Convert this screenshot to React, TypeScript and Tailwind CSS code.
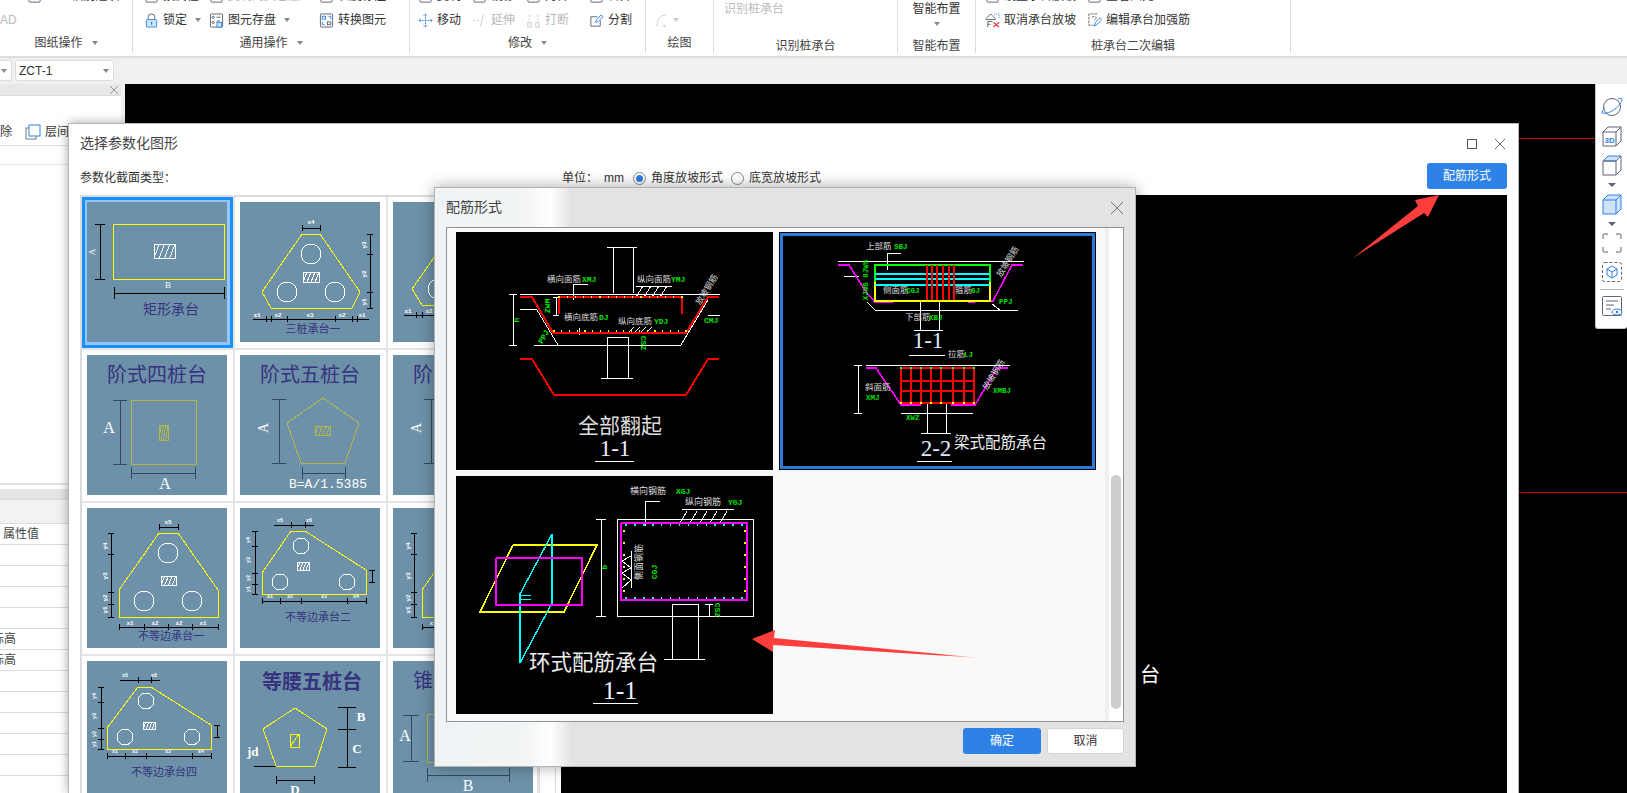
import type { ReactNode } from 'react';

const YEL = '#ffff00';
const OLIVE = '#b4b44c';
const PUR = '#37337f';
const GRN = '#00e000';
const RED = '#ff0000';
const MAG = '#ff00ff';
const CY = '#00ffff';
const MONO = "'Liberation Mono', monospace";
const SERIF = "'Liberation Serif', serif";

function DimV({ x, y1, y2, t = 4, c = '#000' }: { x: number; y1: number; y2: number; t?: number; c?: string }) {
  return (
    <g stroke={c} strokeWidth="1">
      <line x1={x} y1={y1} x2={x} y2={y2} />
      <line x1={x - t} y1={y1} x2={x + t} y2={y1} />
      <line x1={x - t} y1={y2} x2={x + t} y2={y2} />
    </g>
  );
}

function DimH({ y, x1, x2, t = 4, c = '#000' }: { y: number; x1: number; x2: number; t?: number; c?: string }) {
  return (
    <g stroke={c} strokeWidth="1">
      <line x1={x1} y1={y} x2={x2} y2={y} />
      <line x1={x1} y1={y - t} x2={x1} y2={y + t} />
      <line x1={x2} y1={y - t} x2={x2} y2={y + t} />
    </g>
  );
}

function TicksH({ y, xs, t = 3 }: { y: number; xs: number[]; t?: number }) {
  return (
    <g stroke="#000">
      {xs.map((x) => (
        <line key={x} x1={x} y1={y - t} x2={x} y2={y + t} />
      ))}
    </g>
  );
}

function TicksV({ x, ys, t = 3 }: { x: number; ys: number[]; t?: number }) {
  return (
    <g stroke="#000">
      {ys.map((y) => (
        <line key={y} x1={x - t} y1={y} x2={x + t} y2={y} />
      ))}
    </g>
  );
}

function Hatch({ x, y, w, h, c = '#fff' }: { x: number; y: number; w: number; h: number; c?: string }) {
  const step = w / 4;
  return (
    <g stroke={c} fill="none" strokeWidth="1">
      <rect x={x} y={y} width={w} height={h} />
      {[0, 1, 2, 3].map((i) => (
        <line key={i} x1={x + i * step} y1={y + h} x2={x + (i + 1) * step} y2={y} />
      ))}
    </g>
  );
}

function Pile({ cx, cy, r }: { cx: number; cy: number; r: number }) {
  return <circle cx={cx} cy={cy} r={r} fill="none" stroke="#fff" strokeWidth="1" />;
}

function T({ x, y, s = 6, c = '#fff', rot, children, mid, serif }: { x: number; y: number; s?: number; c?: string; rot?: number; children: ReactNode; mid?: boolean; serif?: boolean }) {
  const mono = c === GRN || s <= 6;
  return (
    <text
      x={x}
      y={y}
      fontSize={s}
      fill={c}
      fontFamily={serif ? SERIF : mono ? MONO : undefined}
      fontWeight={mono ? 700 : undefined}
      textAnchor={mid ? 'middle' : 'start'}
      dominantBaseline="middle"
      transform={rot ? `rotate(${rot} ${x} ${y})` : undefined}
    >
      {children}
    </text>
  );
}

function Poly({ p, c = YEL, w = 1 }: { p: string; c?: string; w?: number }) {
  return <polyline points={p} fill="none" stroke={c} strokeWidth={w} />;
}

function Thumb({ children, selected }: { children: ReactNode; selected?: boolean }) {
  return (
    <div className={`h-[151px] w-full pl-[5px] pt-[5px] ${selected ? 'bg-[#95c5f9] shadow-[inset_0_0_0_3px_#1890ff]' : ''}`}>
      <svg viewBox="0 0 140 140" shapeRendering="crispEdges" className="block h-[140px] w-[140px] bg-[#6d91a8]">
        {children}
      </svg>
    </div>
  );
}

function TriPile({ dx = 0 }: { dx?: number }) {
  return (
    <g transform={`translate(${dx} 0)`}>
      <Poly p="72,25 91,25 131,82 131,109 32,109 32,82 72,25" />
      <Pile cx={81} cy={45} r={10} />
      <Pile cx={57} cy={93} r={10} />
      <Pile cx={105} cy={93} r={10} />
      <Hatch x={74} y={68} w={15} h={9} />
      <DimH y={119} x1={32} x2={131} t={3} />
      <TicksH y={119} xs={[57, 81, 105]} />
      <DimV x={24} y1={25} y2={109} t={3} />
      <TicksV x={24} ys={[46, 84, 96]} />
      <T x={18} y={38} rot={-90} mid>y4</T>
      <T x={18} y={68} rot={-90} mid>y3</T>
      <T x={18} y={90} rot={-90} mid>y2</T>
      <T x={18} y={102} rot={-90} mid>y1</T>
      <T x={43} y={115} mid>x1</T>
      <T x={68} y={115} mid>x2</T>
      <T x={92} y={115} mid>x2</T>
      <T x={116} y={115} mid>x1</T>
    </g>
  );
}

function Cells() {
  const cells: ReactNode[] = [
    <Thumb selected key="a">
      <Poly p="26,22 137,22 137,77 26,77 26,22" />
      <Hatch x={67} y={42} w={21} h={14} />
      <DimV x={13} y1={22} y2={77} t={5} />
      <DimH y={91} x1={27} x2={137} t={6} />
      <T x={6} y={50} s={9} rot={-90} mid serif>A</T>
      <T x={81} y={84} s={9} mid serif>B</T>
      <T x={84} y={108} s={14} c={PUR} mid>矩形承台</T>
    </Thumb>,
    <Thumb key="b">
      <Poly p="62,32 80,32 120,90 112,106 31,106 22,90 62,32" />
      <Pile cx={71} cy={52} r={10} />
      <Pile cx={47} cy={90} r={10} />
      <Pile cx={95} cy={90} r={10} />
      <Hatch x={63} y={70} w={16} h={10} />
      <DimH y={26} x1={62} x2={80} t={3} />
      <DimV x={130} y1={32} y2={106} t={3} />
      <TicksV x={130} ys={[52, 90]} />
      <line x1={13} y1={117} x2={129} y2={117} stroke="#000" />
      <TicksH y={117} xs={[26, 31, 47, 95, 112, 117]} />
      <T x={71} y={20} mid>x4</T>
      <T x={124} y={43} rot={-90} mid>y3</T>
      <T x={124} y={72} rot={-90} mid>y2</T>
      <T x={124} y={100} rot={-90} mid>y1</T>
      <T x={17} y={113} mid>x1</T>
      <T x={38} y={113} mid>x2</T>
      <T x={70} y={113} mid>x3</T>
      <T x={102} y={113} mid>x2</T>
      <T x={122} y={113} mid>x1</T>
      <T x={73} y={128} s={11} c={PUR} mid>三桩承台一</T>
    </Thumb>,
    <Thumb key="c">
      <Poly p="59,30 77,30 117,87 109,103 29,103 19,87 59,30" />
      <Pile cx={68} cy={50} r={10} />
      <Pile cx={45} cy={87} r={10} />
      <Pile cx={93} cy={87} r={10} />
      <line x1={11} y1={113} x2={125} y2={113} stroke="#000" />
      <TicksH y={113} xs={[23, 29]} />
      <T x={15} y={109} mid>x1</T>
      <T x={36} y={109} mid>x2</T>
    </Thumb>,
    <Thumb key="d">
      <T x={70} y={22} s={20} c={PUR} mid>阶式四桩台</T>
      <Poly p="44,45 109,45 109,109 44,109 44,45" c={OLIVE} />
      <Hatch x={72} y={70} w={9} h={15} c={OLIVE} />
      <DimV x={33} y1={45} y2={109} t={7} c="#33495a" />
      <DimH y={118} x1={44} x2={108} t={6} c="#33495a" />
      <T x={22} y={74} s={16} mid serif>A</T>
      <T x={78} y={130} s={16} mid serif>A</T>
    </Thumb>,
    <Thumb key="e">
      <T x={70} y={22} s={20} c={PUR} mid>阶式五桩台</T>
      <Poly p="83,43 119,68 105,108 61,108 47,68 83,43" c={OLIVE} />
      <Hatch x={75} y={71} w={15} h={9} c={OLIVE} />
      <DimV x={39} y1={44} y2={108} t={7} c="#33495a" />
      <DimH y={118} x1={62} x2={105} t={6} c="#33495a" />
      <T x={25} y={73} s={14} rot={-90} mid serif>A</T>
      <text x={49} y={133} fontSize={13} fill="#fff" fontFamily={MONO}>B=A/1.5385</text>
    </Thumb>,
    <Thumb key="f">
      <T x={70} y={22} s={20} c={PUR} mid>阶式六桩台</T>
      <DimV x={38} y1={44} y2={108} t={7} c="#33495a" />
      <T x={25} y={73} s={14} rot={-90} mid serif>A</T>
    </Thumb>,
    <Thumb key="g">
      <TriPile />
      <DimH y={19} x1={72} x2={91} t={3} />
      <T x={81} y={14} mid>x5</T>
      <T x={84} y={129} s={11} c={PUR} mid>不等边承台一</T>
    </Thumb>,
    <Thumb key="h">
      <Poly p="51,23 65,23 126,62 126,86 22,86 22,65 51,23" />
      <Pile cx={61} cy={38} r={8} />
      <Pile cx={40} cy={74} r={8} />
      <Pile cx={107} cy={74} r={8} />
      <Hatch x={57} y={54} w={12} h={8} />
      <DimV x={15} y1={23} y2={86} t={3} />
      <TicksV x={15} ys={[38, 65, 76]} />
      <DimH y={93} x1={22} x2={126} t={3} />
      <TicksH y={93} xs={[40, 61, 107]} />
      <DimV x={132} y1={62} y2={74} t={3} />
      <line x1={34} y1={17} x2={74} y2={17} stroke="#000" />
      <TicksH y={17} xs={[51, 65]} />
      <T x={37} y={13} s={5}>x5</T>
      <T x={66} y={13} s={5}>x6</T>
      <T x={9} y={32} rot={-90} s={5} mid>y4</T>
      <T x={9} y={52} rot={-90} s={5} mid>y3</T>
      <T x={9} y={70} rot={-90} s={5} mid>y2</T>
      <T x={9} y={81} rot={-90} s={5} mid>y1</T>
      <T x={30} y={89} s={5} mid>x1</T>
      <T x={50} y={89} s={5} mid>x2</T>
      <T x={84} y={89} s={5} mid>x3</T>
      <T x={116} y={89} s={5} mid>x4</T>
      <T x={78} y={110} s={11} c={PUR} mid>不等边承台二</T>
    </Thumb>,
    <Thumb key="i">
      <TriPile dx={-3} />
    </Thumb>,
    <Thumb key="j">
      <Poly p="51,26 64,26 124,64 124,88 20,88 20,67 51,26" />
      <Pile cx={59} cy={40} r={8} />
      <Pile cx={38} cy={76} r={8} />
      <Pile cx={105} cy={76} r={8} />
      <Hatch x={56} y={61} w={12} h={7} />
      <DimV x={14} y1={26} y2={88} t={3} />
      <TicksV x={14} ys={[41, 67, 78]} />
      <DimH y={95} x1={20} x2={124} t={3} />
      <TicksH y={95} xs={[38, 59, 105]} />
      <DimV x={130} y1={64} y2={76} t={3} />
      <line x1={33} y1={19} x2={73} y2={19} stroke="#000" />
      <TicksH y={19} xs={[51, 64]} />
      <T x={35} y={15} s={5}>x5</T>
      <T x={64} y={15} s={5}>x6</T>
      <T x={8} y={35} rot={-90} s={5} mid>y4</T>
      <T x={8} y={55} rot={-90} s={5} mid>y3</T>
      <T x={8} y={73} rot={-90} s={5} mid>y2</T>
      <T x={8} y={83} rot={-90} s={5} mid>y1</T>
      <T x={28} y={91} s={5} mid>x1</T>
      <T x={48} y={91} s={5} mid>x2</T>
      <T x={81} y={91} s={5} mid>x3</T>
      <T x={114} y={91} s={5} mid>x4</T>
      <T x={77} y={112} s={11} c={PUR} mid>不等边承台四</T>
    </Thumb>,
    <Thumb key="k">
      <text x={72} y={28} fontSize={20} fontWeight="700" fill={PUR} textAnchor="middle">等腰五桩台</text>
      <Poly p="55,47 87,68 75,105 36,105 23,68 55,47" />
      <Poly p="50,73 59,73 59,86 50,86 50,73 59,73" />
      <line x1={50} y1={86} x2={59} y2={73} stroke={YEL} />
      <DimV x={107} y1={46} y2={68} t={9} />
      <DimV x={107} y1={68} y2={106} t={9} />
      <DimH y={119} x1={36} x2={74} t={4} />
      <line x1={14} y1={105} x2={36} y2={105} stroke="#000" />
      <T x={121} y={57} s={13} mid serif><tspan fontWeight="700">B</tspan></T>
      <T x={117} y={89} s={13} mid serif><tspan fontWeight="700">C</tspan></T>
      <T x={7} y={92} s={13} serif><tspan fontWeight="700">jd</tspan></T>
      <T x={55} y={130} s={13} mid serif><tspan fontWeight="700">D</tspan></T>
    </Thumb>,
    <Thumb key="l">
      <T x={70} y={22} s={20} c={PUR} mid>锥形桩承台</T>
      <Poly p="34,53 116,53 116,101 34,101 34,53" c={OLIVE} />
      <DimV x={18} y1={54} y2={100} t={8} c="#33495a" />
      <DimH y={114} x1={34} x2={116} t={7} c="#33495a" />
      <T x={12} y={76} s={16} mid serif>A</T>
      <T x={75} y={126} s={16} mid serif>B</T>
    </Thumb>,
  ];
  return (
    <div className="grid h-[600px] w-[459px] shrink-0 grid-cols-[153px_153px_151px] content-start border-l-2 border-t-2 border-[#dcdcdc]">
      {cells.map((c, i) => (
        <div key={i} className="h-[153px] border-b-2 border-r-2 border-[#e4e4e4]">
          {c}
        </div>
      ))}
    </div>
  );
}

function Dots({ pts, c, r = 0.8 }: { pts: [number, number][]; c: string; r?: number }) {
  return (
    <g fill={c}>
      {pts.map(([x, y], i) => (
        <rect key={i} x={x - r} y={y - r} width={r * 2} height={r * 2} />
      ))}
    </g>
  );
}

const range = (a: number, b: number, n: number) => Array.from({ length: n }, (_, i) => a + ((b - a) * i) / (n - 1));

function PanelA() {
  return (
    <svg viewBox="0 0 317 238" shapeRendering="crispEdges" className="block h-[238px] w-[317px] bg-black">
      <g stroke="#fff" fill="none">
        <line x1={64} y1={62} x2={264} y2={62} />
        <polyline points="157,61 157,15 177,15 177,61" />
        <line x1={151} y1={15} x2={181} y2={15} />
        <polyline points="151,146 151,105 172,105 172,146" />
        <line x1={145} y1={146} x2={177} y2={146} />
        <line x1={78} y1={113} x2={225} y2={113} />
        <line x1={81} y1={78} x2={102} y2={113} />
        <line x1={225} y1={113} x2={252} y2={68} />
        <line x1={64} y1={77} x2={81} y2={77} />
        <line x1={252} y1={83} x2={264} y2={83} />
        <line x1={117} y1={52} x2={132} y2={52} />
        <line x1={117} y1={52} x2={117} y2={68} />
        <line x1={123} y1={96} x2={123} y2={103} />
        <polyline points="180,54 216,54" />
        {range(180, 204, 4).map((x) => (
          <line key={x} x1={x} y1={65} x2={x + 7} y2={54} />
        ))}
        {range(172, 190, 4).map((x) => (
          <line key={x} x1={x} y1={101} x2={x + 6} y2={95} />
        ))}
      </g>
      <DimV x={57} y1={62} y2={113} t={4} c="#fff" />
      <DimV x={100} y1={65} y2={83} t={3} c="#fff" />
      <Poly p="64,65 76,65 97,101 230,101 252,65 263,65" c={RED} w={2} />
      <Poly p="103,82 103,65 226,65 226,82" c={RED} w={2} />
      <Poly p="64,127 76,127 98,163 230,163 252,127 263,127" c={RED} w={2} />
      <Dots pts={range(103, 226, 16).map((x) => [x, 65] as [number, number])} c={YEL} r={0.6} />
      <Dots pts={range(98, 230, 18).map((x) => [x, 99] as [number, number])} c={YEL} r={0.6} />
      <T x={91} y={48} s={8.5} c="#ddd">横向面筋</T>
      <T x={126} y={48} s={8} c={GRN}>XMJ</T>
      <T x={181} y={48} s={8.5} c="#ddd">纵向面筋</T>
      <T x={215} y={48} s={8} c={GRN}>YMJ</T>
      <T x={108} y={86} s={8.5} c="#ddd">横向底筋</T>
      <T x={143} y={86} s={8} c={GRN}>DJ</T>
      <T x={162} y={90} s={8.5} c="#ddd">纵向底筋</T>
      <T x={198} y={90} s={8} c={GRN}>YDJ</T>
      <T x={248} y={89} s={8} c={GRN}>CMJ</T>
      <T x={92} y={74} s={8} c={GRN} rot={-90} mid>ZWM</T>
      <T x={88} y={105} s={8} c={GRN} rot={-60} mid>PPJ</T>
      <T x={61} y={88} s={8} c={GRN} rot={-90} mid>h</T>
      <T x={187} y={111} s={8} c={GRN} rot={90} mid>CSZ</T>
      <T x={251} y={58} s={8.5} c="#ddd" rot={-58} mid>放坡钢筋</T>
      <T x={164} y={195} s={21} c="#ddd" mid>全部翻起</T>
      <T x={159} y={219} s={23} c="#eef" mid serif>1-1</T>
      <line x1={139} y1={229} x2={178} y2={229} stroke="#fff" />
    </svg>
  );
}

function PanelB() {
  return (
    <div className="h-[238px] w-[317px] border border-black">
      <div className="border-[3px] border-[#2a7bd6]">
        <svg viewBox="4 4 309 230" shapeRendering="crispEdges" className="block h-[230px] w-[309px] bg-black">
          <g stroke="#fff" fill="none">
            <line x1={59} y1={29} x2={245} y2={29} />
            <line x1={96} y1={78} x2={239} y2={78} />
            <polyline points="141,69 141,98 160,98 160,69" />
            <line x1={135} y1={98} x2={164} y2={98} />
            <line x1={87} y1={133} x2={231} y2={133} />
            <line x1={122} y1={181} x2={194} y2={181} />
            <polyline points="148,172 148,201 167,201 167,172" />
            <line x1={142} y1={201} x2={172} y2={201} />
            <line x1={130} y1={123} x2={166} y2={123} />
            <line x1={138} y1={229} x2={173} y2={229} />
            <line x1={65} y1={44} x2={80} y2={44} />
            <line x1={88} y1={70} x2={96} y2={78} />
            <line x1={213} y1={72} x2={221} y2={78} />
            <polyline points="108,21 122,21" />
            <line x1={108} y1={21} x2={108} y2={38} />
          </g>
          <DimV x={79} y1={133} y2={181} t={4} c="#fff" />
          <Poly p="59,33 70,33 87,60 96,70 114,70" c={MAG} w={1.6} />
          <Poly p="189,70 214,69 233,33 244,33" c={MAG} w={1.6} />
          <Poly p="96,50 96,33 211,33 211,50" c="#00ff00" w={1.6} />
          <Poly p="96,50 96,69 211,69 211,50" c={YEL} w={1.6} />
          {[42, 47, 53].map((y) => (
            <line key={y} x1={96} y1={y} x2={211} y2={y} stroke={CY} strokeWidth="1.6" />
          ))}
          {[148, 153, 158, 164, 170, 175].map((x) => (
            <line key={x} x1={x} y1={33} x2={x} y2={68} stroke={RED} strokeWidth="1.6" />
          ))}
          <Poly p="87,136 97,136 122,173 142,173" c={MAG} w={1.6} />
          <Poly p="172,173 196,173 218,136 229,136" c={MAG} w={1.6} />
          {[122, 132, 142, 152, 162, 174, 185, 195].map((x) => (
            <line key={x} x1={x} y1={136} x2={x} y2={171} stroke={RED} strokeWidth="1.6" />
          ))}
          {[136, 149, 159, 171].map((y) => (
            <line key={y} x1={122} y1={y} x2={195} y2={y} stroke={RED} strokeWidth="1.6" />
          ))}
          <Dots pts={[122, 132, 142, 152, 162, 174, 185, 195].map((x) => [x, 171] as [number, number])} c={YEL} />
          <Dots pts={[122, 132, 142, 152, 162, 174, 185, 195].map((x) => [x, 136] as [number, number])} c="#00ff80" />
          <T x={87} y={15} s={8.5} c="#ddd">上部筋</T>
          <T x={115} y={15} s={7.5} c={GRN}>SBJ</T>
          <T x={104} y={59} s={8.5} c="#ddd">侧面筋</T>
          <T x={127} y={59} s={7.5} c={GRN}>CGJ</T>
          <T x={176} y={59} s={8.5} c="#ddd">箍筋</T>
          <T x={192} y={59} s={7.5} c={GRN}>GJ</T>
          <T x={126} y={86} s={8.5} c="#ddd">下部筋</T>
          <T x={150} y={86} s={7.5} c={GRN}>XBJ</T>
          <T x={220} y={70} s={7.5} c={GRN}>PPJ</T>
          <T x={169} y={123} s={8.5} c="#ddd">拉筋</T>
          <T x={185} y={123} s={7.5} c={GRN}>LJ</T>
          <T x={86} y={156} s={8.5} c="#ddd">斜面筋</T>
          <T x={87} y={166} s={7.5} c={GRN}>XMJ</T>
          <T x={214} y={159} s={7.5} c={GRN}>XMBJ</T>
          <T x={127} y={186} s={7.5} c={GRN}>XWZ</T>
          <T x={87} y={48} s={7.5} c={GRN} rot={-90} mid>XJWS 8JWS</T>
          <T x={229} y={30} s={8.5} c="#ddd" rot={-58} mid>放坡钢筋</T>
          <T x={215} y={143} s={8.5} c="#ddd" rot={-58} mid>放坡钢筋</T>
          <T x={149} y={111} s={23} c="#dfe8ff" mid serif>1-1</T>
          <T x={157} y={219} s={23} c="#dfe8ff" mid serif>2-2</T>
          <T x={175} y={212} s={15.5} c="#eee">梁式配筋承台</T>
        </svg>
      </div>
    </div>
  );
}

function PanelC() {
  return (
    <svg viewBox="0 0 317 238" shapeRendering="crispEdges" className="block h-[238px] w-[317px] bg-black">
      <Poly p="57,69 141,69 108,136 24,136 57,69" w={1.5} />
      <Poly p="64,187 64,118 96,58 96,127 64,187" c={CY} w={1.4} />
      <Poly p="40,82 126,82 126,129 40,129 40,82" c={MAG} w={1.5} />
      <line x1={64} y1={119} x2={75} y2={119} stroke={CY} />
      <line x1={64} y1={123} x2={75} y2={123} stroke={CY} />
      <g stroke="#fff" fill="none">
        <rect x={161} y={43} width={136} height={97} />
        <polyline points="216,128 216,183 242,183 242,128" />
        <polyline points="216,128 242,128" />
        <line x1={208} y1={183} x2={249} y2={183} />
        <line x1={137} y1={227} x2={182} y2={227} />
        <polyline points="189,25 204,25" />
        <line x1={189} y1={25} x2={189} y2={50} />
        <line x1={226} y1={33} x2={278} y2={33} />
        {range(224, 264, 5).map((x) => (
          <line key={x} x1={x} y1={47} x2={x + 7} y2={35} />
        ))}
        <polyline points="175,80 166,85 175,92 166,97 175,104 166,112" />
        <line x1={175} y1={75} x2={175} y2={112} />
      </g>
      <DimV x={145} y1={43} y2={140} t={5} c="#fff" />
      <DimV x={253} y1={128} y2={140} t={4} c="#fff" />
      <Poly p="165,47 291,47 291,124 165,124 165,47" c={MAG} w={1.8} />
      <Dots pts={range(170, 286, 14).flatMap((x) => [[x, 49], [x, 122]] as [number, number][])} c={CY} />
      <Dots pts={range(55, 115, 6).flatMap((y) => [[168, y], [289, y]] as [number, number][])} c={YEL} />
      <T x={174} y={16} s={9} c="#ddd">横向钢筋</T>
      <T x={220} y={16} s={8} c={GRN}>XGJ</T>
      <T x={229} y={27} s={9} c="#ddd">纵向钢筋</T>
      <T x={272} y={27} s={8} c={GRN}>YGJ</T>
      <T x={184} y={86} s={9} c="#ddd" rot={-90} mid>侧面钢筋</T>
      <T x={199} y={96} s={8} c={GRN} rot={-90} mid>CGJ</T>
      <T x={261} y={134} s={8} c={GRN} rot={90} mid>CSZ</T>
      <T x={149} y={91} s={8} c={GRN} rot={-90} mid>b</T>
      <T x={73} y={188} s={21.5} c="#eee">环式配筋承台</T>
      <T x={164} y={217} s={26} c="#eef" mid serif>1-1</T>
    </svg>
  );
}

function Caret({ className = '' }: { className?: string }) {
  return <span className={`inline-block h-0 w-0 border-x-[3.5px] border-t-[4px] border-x-transparent border-t-[#888] ${className}`} />;
}

function RIcon({ kind }: { kind: string }) {
  const blue = '#2e86e8';
  const dk = '#5a6372';
  const gr = '#c4c8cc';
  return (
    <svg viewBox="0 0 16 16" className="h-[15px] w-[15px] shrink-0" fill="none" stroke={dk} strokeWidth="1">
      {kind === 'lock' && (
        <>
          <path d="M4.5 7V4.5a3.5 3.5 0 0 1 7 0V7" />
          <rect x="2.5" y="7" width="11" height="8" rx="1" fill="#cfe3fb" stroke={blue} />
          <rect x="7.4" y="9.5" width="1.4" height="3" fill={blue} stroke="none" />
        </>
      )}
      {kind === 'save' && (
        <>
          <rect x="1.5" y="1" width="13" height="14" rx="1" />
          <circle cx="4.5" cy="4.5" r="1.2" />
          <path d="M8 4.5h4M8 8.5h4" />
          <circle cx="4.5" cy="10" r="1.2" />
          <rect x="8.5" y="10" width="5" height="5" stroke={blue} fill="#cfe3fb" />
        </>
      )}
      {kind === 'conv' && (
        <>
          <rect x="1.5" y="1" width="13" height="14" rx="1" />
          <rect x="3.5" y="3.5" width="3.5" height="3" stroke={blue} />
          <rect x="9" y="9.5" width="3.5" height="3" />
          <path d="M10 3.5h2.5v3M6 12.5H3.5v-3" stroke={blue} />
        </>
      )}
      {kind === 'move' && <path d="M8 1v14M1 8h14M6 3l2-2 2 2M6 13l2 2 2-2M3 6 1 8l2 2M13 6l2 2-2 2" stroke={blue} strokeDasharray="2 1" />}
      {kind === 'extend' && <path d="M1 8h2M5 8h2M9 14l3-12" stroke={gr} />}
      {kind === 'break' && (
        <>
          <rect x="2" y="10" width="3.5" height="5" stroke={gr} />
          <rect x="10.5" y="10" width="3.5" height="5" stroke={gr} />
          <path d="M3.5 2v2M3.5 6v2M12.5 2v2M12.5 6v2" stroke={gr} />
        </>
      )}
      {kind === 'split' && (
        <>
          <path d="M12 8v6H2V4h7" />
          <path d="M7 10l1-3 5-5 2 2-5 5z" stroke={blue} />
        </>
      )}
      {kind === 'arc' && (
        <>
          <path d="M2 14C2 7 6 2 12 2" stroke={gr} />
          <circle cx="10" cy="14" r="1" stroke={gr} />
        </>
      )}
      {kind === 'cancel' && (
        <>
          <path d="M1 6 6 1l5 5v1H1zM3 9v6M3 9h5M3 12h3" />
          <path d="M10 1h5v5" stroke={blue} strokeDasharray="1 1" />
          <path d="M9 10l6 5M15 10l-6 5" stroke="#e5342c" strokeWidth="1.3" />
        </>
      )}
      {kind === 'edit' && (
        <>
          <path d="M11 1H2v12h5M5 5a3 3 0 0 1 5 0L8 8" strokeDasharray="3 1" />
          <path d="M8 14l1-4 5-5 2 2-5 5z" stroke={blue} />
        </>
      )}
      {kind === 'plain' && <rect x="2" y="2" width="12" height="12" rx="1" />}
    </svg>
  );
}

function Item({ icon, label, grey, caret }: { icon?: string; label: string; grey?: boolean; caret?: boolean }) {
  return (
    <div className={`flex h-[24px] shrink-0 items-center gap-[4px] whitespace-nowrap ${grey ? 'text-[#b8b8b8]' : 'text-[#333]'}`}>
      {icon && <RIcon kind={icon} />}
      <span>{label}</span>
      {caret && <Caret className="ml-[4px]" />}
    </div>
  );
}

function Group({ width, label, caret, children, low }: { width: string; label: string; caret?: boolean; children?: ReactNode; low?: boolean }) {
  return (
    <div className={`flex h-[53px] shrink-0 flex-col border-r border-[#dcdcdc] ${width}`}>
      <div className="h-[32px] shrink-0 overflow-hidden">
        <div className="flex h-full flex-col justify-end">{children}</div>
      </div>
      <div className={`flex h-[18px] shrink-0 items-center justify-center gap-[9px] text-[#444] ${low ? 'mt-[5px]' : 'mt-[2px]'}`}>
        <span>{label}</span>
        {caret && <Caret />}
      </div>
    </div>
  );
}

function Ribbon() {
  return (
    <div className="flex h-[58px] overflow-hidden border-b-2 border-[#dedede] bg-white text-[12px]">
      <Group width="w-[133px]" label="图纸操作" caret>
        <div className="pl-[27px]">
          <Item icon="plain" label="CAD识别选项" />
        </div>
        <div className="flex h-[24px] shrink-0 items-center text-[#bbb]">AD</div>
      </Group>
      <Group width="w-[277px]" label="通用操作" caret>
        <div className="grid grid-cols-[65px_110px_1fr] pl-[11px]">
          <Item icon="plain" label="按属性" />
          <Item icon="plain" label="复制到其它层" grey />
          <Item icon="plain" label="长度标注" />
          <Item icon="lock" label="锁定" caret />
          <Item icon="save" label="图元存盘" caret />
          <Item icon="conv" label="转换图元" />
        </div>
      </Group>
      <Group width="w-[236px]" label="修改" caret>
        <div className="grid grid-cols-[54px_54px_63px_1fr] pl-[8px]">
          <Item icon="plain" label="复制" />
          <Item icon="plain" label="镜像" />
          <Item icon="plain" label="对齐" />
          <Item icon="plain" label="合并" />
          <Item icon="move" label="移动" />
          <Item icon="extend" label="延伸" grey />
          <Item icon="break" label="打断" grey />
          <Item icon="split" label="分割" />
        </div>
      </Group>
      <Group width="w-[68px]" label="绘图">
        <div className="flex h-[24px] shrink-0 items-center gap-[3px] pl-[9px]">
          <RIcon kind="arc" />
          <Caret className="border-t-[#ccc]" />
        </div>
      </Group>
      <div className="flex h-[53px] w-[184px] shrink-0 flex-col border-r border-[#dcdcdc]">
        <div className="flex h-[18px] items-center pl-[10px] text-[#bbb]">识别桩承台</div>
        <div className="mt-[19px] flex h-[18px] items-center justify-center text-[#444]">识别桩承台</div>
      </div>
      <div className="flex h-[53px] w-[78px] shrink-0 flex-col items-center border-r border-[#dcdcdc]">
        <div className="flex h-[18px] items-center text-[#333]">智能布置</div>
        <Caret className="mt-[4px]" />
        <div className="mt-[11px] flex h-[18px] items-center text-[#444]">智能布置</div>
      </div>
      <Group width="w-[315px]" label="桩承台二次编辑" low>
        <div className="grid grid-cols-[102px_1fr] pl-[9px]">
          <Item icon="plain" label="设置承台放坡" />
          <Item icon="plain" label="查看图元" />
          <Item icon="cancel" label="取消承台放坡" />
          <Item icon="edit" label="编辑承台加强筋" />
        </div>
      </Group>
    </div>
  );
}

function SelectBar() {
  return (
    <div className="flex h-[26px] gap-[3px] bg-[#f0f0f0] pt-[2px] text-[12px] text-[#333]">
      <div className="flex h-[21px] w-[12px] items-center rounded-r-[3px] border border-l-0 border-[#dedede] bg-white pl-[1px]">
        <Caret className="border-t-[#555]" />
      </div>
      <div className="flex h-[21px] w-[99px] items-center justify-between rounded-[3px] border border-[#dedede] bg-white pl-[3px] pr-[4px]">
        <span>ZCT-1</span>
        <Caret className="border-t-[#555]" />
      </div>
    </div>
  );
}

function LeftPanel() {
  const rows = ['', '', '', '', '标高', '标高', '', '', '', '', ''];
  return (
    <div className="flex h-full w-[121px] shrink-0 flex-col overflow-hidden bg-white text-[12px] text-[#333]">
      <div className="flex h-[12px] shrink-0 items-center justify-end border-b border-[#dcdcdc] bg-[#e8e8e8] pr-[3px] text-[#999]">
        <svg viewBox="0 0 8 8" className="h-[8px] w-[8px]" stroke="currentColor"><path d="M0 0l8 8M8 0l-8 8" /></svg>
      </div>
      <div className="mt-[22px] flex h-[28px] shrink-0 items-center border-b border-[#e2e2e2]">
        <span className="w-[25px]">除</span>
        <svg viewBox="0 0 16 16" className="h-[16px] w-[16px]" fill="none">
          <rect x="1" y="4" width="10" height="11" stroke="#777" />
          <rect x="4" y="1" width="11" height="11" fill="#fff" stroke="#2e86e8" />
        </svg>
        <span className="ml-[4px]">层间</span>
      </div>
      <div className="h-[19px] shrink-0 border-b border-[#e8e8e8]" />
      <div className="h-[320px] shrink-0 border-b-2 border-[#e0e0e0]" />
      <div className="mt-[4px] h-[11px] shrink-0 border-b border-[#dcdcdc] bg-[#e4e4e4]" />
      <div className="h-[24px] shrink-0 border-b border-[#dcdcdc] bg-[#f2f2f2]" />
      <div className="flex h-[21px] shrink-0 items-center border-b border-[#dcdcdc] pl-[3px] text-[#444]">属性值</div>
      {rows.map((r, i) => (
        <div key={i} className="flex h-[21px] shrink-0 items-center overflow-hidden border-b border-[#dcdcdc]">
          {r && <span className="-ml-[8px] text-[#444]">{r}</span>}
        </div>
      ))}
    </div>
  );
}

function ToolIcon({ children }: { children: ReactNode }) {
  return (
    <svg viewBox="0 0 22 22" className="h-[22px] w-[22px] shrink-0" fill="none" stroke="#5c6475" strokeWidth="1">
      {children}
    </svg>
  );
}

function SideTools() {
  const b = '#2f80e4';
  const tri = <span className="h-0 w-0 border-x-[4px] border-t-[4px] border-x-transparent border-t-[#5c6475]" />;
  return (
    <div className="absolute right-0 top-[84px] flex h-[245px] w-[32px] flex-col items-center rounded-b-[3px] border-b border-l border-[#c8c8c8] bg-white pt-[12px]">
      <ToolIcon>
        <circle cx="11" cy="11" r="8.5" />
        <path d="M1 17c4 1 9-1 13-4s7-7 7-10" stroke={b} />
        <path d="M1 17c-.5-1 1-3 3-5M21 3c0-1-2-1-4 0" stroke={b} />
      </ToolIcon>
      <div className="mt-[7px]">
        <ToolIcon>
          <path d="M2 7l5-5h13v14l-5 5H2zM2 7h13v14M15 7l5-5" />
          <text x="3.5" y="18" fontSize="8" fontWeight="700" fill={b} stroke="none">3D</text>
        </ToolIcon>
      </div>
      <div className="mt-[7px]">
        <ToolIcon>
          <path d="M2 7l5-5h13l-5 5z" fill="#cfe2fa" stroke={b} />
          <path d="M2 7h13v14H2zM15 7l5-5v14l-5 5" />
        </ToolIcon>
      </div>
      <div className="flex h-[17px] items-center">{tri}</div>
      <ToolIcon>
        <path d="M2 7l5-5h13v14l-5 5H2z" fill="#cfe2fa" stroke={b} />
        <path d="M2 7h13v14M15 7l5-5" stroke={b} />
      </ToolIcon>
      <div className="flex h-[17px] items-center">{tri}</div>
      <ToolIcon>
        <path d="M2 7V3a1 1 0 0 1 1-1h4M15 2h4a1 1 0 0 1 1 1v4M20 15v4a1 1 0 0 1-1 1h-4M7 20H3a1 1 0 0 1-1-1v-4" />
      </ToolIcon>
      <div className="mt-[7px]">
        <ToolIcon>
          <rect x="1.5" y="1.5" width="19" height="19" rx="2" strokeDasharray="3 2" />
          <path d="M11 5l5 3v6l-5 3-5-3V8zM6 8l5 3 5-3M11 11v6" stroke={b} />
        </ToolIcon>
      </div>
      <div className="mb-[5px] mt-[6px] h-px w-[24px] bg-[#b8b8b8]" />
      <ToolIcon>
        <rect x="1.5" y="1.5" width="19" height="19" rx="1" />
        <path d="M5 6h12M5 10h8M5 14h5" />
        <ellipse cx="16" cy="17" rx="5" ry="3" fill="#fff" stroke={b} />
        <circle cx="16" cy="17" r="1.3" fill={b} stroke="none" />
      </ToolIcon>
    </div>
  );
}

function Radio({ on }: { on?: boolean }) {
  return (
    <span className="flex h-[13px] w-[13px] items-center justify-center rounded-full border border-[#888] bg-white">
      {on && <span className="h-[7px] w-[7px] rounded-full bg-[#2e7fe0]" />}
    </span>
  );
}

function MainDialog() {
  return (
    <div className="absolute left-[68px] top-[123px] flex h-[670px] w-[1451px] flex-col border-l border-r border-t border-[#b8b8b8] bg-white px-[11px] text-[12px] text-[#333] shadow-[0_0_10px_rgba(0,0,0,0.35)]">
      <div className="flex h-[39px] shrink-0 items-center justify-between pr-[2px]">
        <span className="text-[14px] text-[#444]">选择参数化图形</span>
        <div className="flex items-center gap-[18px]">
          <span className="h-[10px] w-[10px] border border-[#555]" />
          <svg viewBox="0 0 10 10" className="h-[10px] w-[10px]" stroke="#666"><path d="M0 0l10 10M10 0L0 10" /></svg>
        </div>
      </div>
      <div className="flex h-[32px] shrink-0 items-start">
        <span className="mt-[6px] w-[482px]">参数化截面类型：</span>
        <div className="mt-[6px] flex items-center">
          <span className="w-[42px]">单位：</span>
          <span className="w-[29px]">mm</span>
          <Radio on />
          <span className="ml-[5px] w-[80px]">角度放坡形式</span>
          <Radio />
          <span className="ml-[5px]">底宽放坡形式</span>
        </div>
        <button className="ml-auto flex h-[26px] w-[80px] items-center justify-center rounded-[3px] bg-[#2e82e5] text-white">配筋形式</button>
      </div>
      <div className="flex min-h-0 flex-1 overflow-hidden">
        <Cells />
        <div className="h-full w-[17px] shrink-0 border-l border-r border-[#dcdcdc]" />
        <div className="relative ml-[5px] h-full flex-1 bg-black">
          <span className="absolute left-[579px] top-[470px] text-[20px] leading-none text-white">台</span>
        </div>
      </div>
    </div>
  );
}

function RebarDialog() {
  return (
    <div className="absolute left-[434px] top-[187px] flex h-[580px] w-[702px] flex-col border border-[#b4b4b4] bg-[linear-gradient(90deg,#f0f3f5_0%,#f2f4f5_13%,#ffffff_16.5%,#e3e3e3_19.5%,#e3e3e3_100%)] text-[12px] text-[#333] shadow-[0_0_14px_rgba(0,0,0,0.35)]">
      <div className="flex h-[39px] shrink-0 items-center justify-between pl-[11px] pr-[12px]">
        <span className="text-[14px] text-[#444]">配筋形式</span>
        <svg viewBox="0 0 12 12" className="h-[12px] w-[12px]" stroke="#777"><path d="M0 0l12 12M12 0L0 12" /></svg>
      </div>
      <div className="relative mx-[11px] h-[495px] shrink-0 border border-[#8d9299] bg-[#f9f9f9]">
        <div className="grid grid-cols-[317px_317px] gap-[6px] pl-[9px] pt-[4px]">
          <PanelA />
          <PanelB />
          <PanelC />
        </div>
        <div className="absolute bottom-0 right-0 top-0 w-[18px] border-l-[4px] border-[#f0f0f0] bg-white" />
        <div className="absolute right-[2px] top-[247px] h-[234px] w-[10px] rounded-full bg-[#cdcdcd]" />
      </div>
      <div className="mt-[6px] flex justify-end gap-[6px] pr-[11px]">
        <button className="flex h-[26px] w-[78px] items-center justify-center rounded-[3px] bg-[#2e82e5] text-white">确定</button>
        <button className="flex h-[26px] w-[77px] items-center justify-center rounded-[3px] border border-[#d4d4d4] bg-white">取消</button>
      </div>
    </div>
  );
}

function Arrows() {
  return (
    <svg viewBox="0 0 1627 793" className="pointer-events-none absolute inset-0 h-[793px] w-[1627px]">
      <defs>
        <linearGradient id="fade" gradientUnits="userSpaceOnUse" x1="780" y1="645" x2="981" y2="658">
          <stop offset="0" stopColor="#ff3d3d" />
          <stop offset="0.8" stopColor="#ff3d3d" />
          <stop offset="1" stopColor="#ff3d3d" stopOpacity="0.15" />
        </linearGradient>
      </defs>
      <polygon points="1353,258 1418,206 1415,200 1439,195 1428,217 1424,213" fill="#ff3d3d" />
      <polygon points="752,639 775,630 774,638 981,658 773,645 773,652" fill="url(#fade)" />
    </svg>
  );
}

export default function App() {
  return (
    <div className="relative h-[793px] w-[1627px] overflow-hidden bg-[#f0f0f0] font-['Liberation_Sans','Noto_Sans_CJK_SC',sans-serif]">
      <Ribbon />
      <SelectBar />
      <div className="flex h-[709px]">
        <LeftPanel />
        <div className="relative ml-[4px] flex-1 bg-black">
          <div className="absolute left-0 right-0 top-[54px] h-px bg-[#e00000]" />
          <div className="absolute left-0 right-0 top-[408px] h-px bg-[#e00000]" />
        </div>
      </div>
      <SideTools />
      <MainDialog />
      <RebarDialog />
      <Arrows />
    </div>
  );
}
